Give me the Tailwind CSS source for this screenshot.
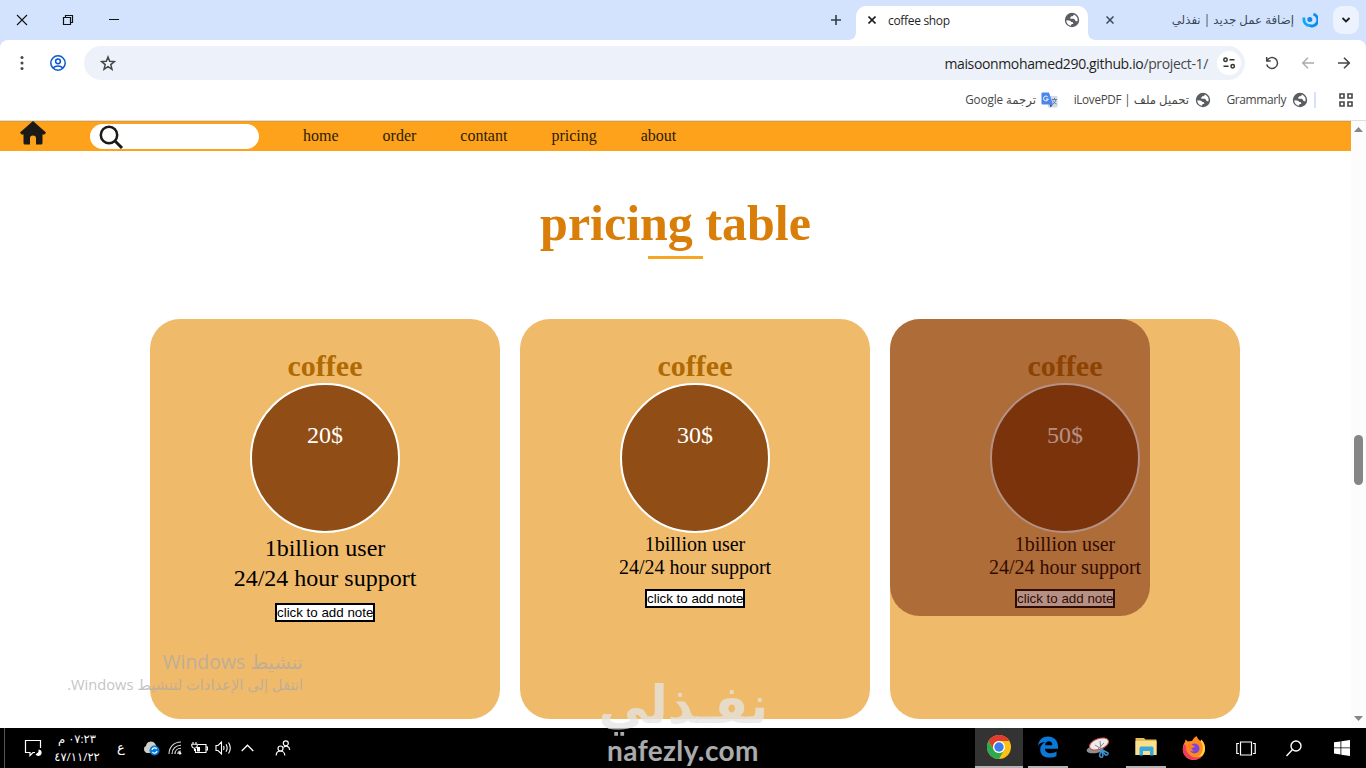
<!DOCTYPE html>
<html lang="en">
<head>
    <meta charset="UTF-8">
    <meta name="viewport" content="width=device-width, initial-scale=1.0">
    <title>coffee shop</title>
    <script src="https://cdn.jsdelivr.net/npm/@tailwindcss/browser@4"></script>
</head>
<body class="w-[1366px] h-[768px] overflow-hidden relative flex flex-col bg-white font-['Open_Sans','DejaVu_Sans',sans-serif]">

    <!-- Shared icons -->
    <svg class="hidden">
        <symbol id="globe" viewBox="0 0 16 16">
            <circle cx="8" cy="8" r="7.200" fill="#5a5d61"/>
            <path d="M2.300 8.300l2.700.2q2 .2 2.200 1.600h1q1 .2 1 1.300v.6H7.600q-.2 1.300-1 1.800C4 13.200 2.200 11 2.300 8.300z" fill="#fff"/>
            <path d="M9.800 2.600q0 1.400-1.300 1.600H7.200q0 1.400-1.400 1.500.2 1 1.400 1h2.400q1.200.2 1.300 1.400.2 1.100 1.500 1.100h1.100q.5-2.600-.6-4.100Q11.600 3.200 9.800 2.600z" fill="#fff"/>
        </symbol>
    </svg>

    <!-- Tab strip -->
    <header class="h-10 shrink-0 flex bg-[#d3e3fd] text-[#1f1f1f]">
        <div class="flex items-center">
            <div class="w-11 flex justify-center"><svg width="12" height="12" viewBox="0 0 12 12" stroke="#111" stroke-width="1.1"><path d="M1 1l10 10M11 1L1 11"/></svg></div>
            <div class="w-12 flex justify-center"><svg width="12" height="12" viewBox="0 0 12 12" fill="none" stroke="#111" stroke-width="1.2"><path d="M1.500 3.500h7v7h-7zM3.500 3.500v-2h7v7h-2"/></svg></div>
            <div class="w-11 flex justify-center"><svg width="12" height="12" viewBox="0 0 12 12" stroke="#111" stroke-width="1"><path d="M1 5.500h10"/></svg></div>
        </div>
        <div class="ml-auto flex items-center">
            <svg class="mr-[15px]" width="10" height="10" viewBox="0 0 10 10" stroke="#333c4b" stroke-width="1.600"><path d="M5 0v10M0 5h10"/></svg>
            <div class="relative w-[232px] h-[34px] self-end rounded-t-[10px] bg-white flex items-center">
                <svg class="absolute -left-2 bottom-0" width="8" height="8" viewBox="0 0 8 8" fill="#fff"><path d="M8 0v8H0c5 0 8-3 8-8z"/></svg>
                <svg class="absolute -right-2 bottom-0" width="8" height="8" viewBox="0 0 8 8" fill="#fff"><path d="M0 0v8h8C3 8 0 5 0 0z"/></svg>
                <svg class="ml-3 -mt-1.5" width="8" height="8" viewBox="0 0 8 8" stroke="#1f1f1f" stroke-width="1.600"><path d="M.5.5l7 7M7.500.5l-7 7"/></svg>
                <span class="ml-3 -mt-1 text-[12px] tracking-[-0.32px]">coffee shop</span>
                <svg class="ml-auto mr-2 -mt-1.5" width="16" height="16"><use href="#globe"/></svg>
            </div>
            <svg class="ml-[18px]" width="8" height="8" viewBox="0 0 8 8" stroke="#3c4757" stroke-width="1.500"><path d="M.5.5l7 7M7.500.5l-7 7"/></svg>
            <div class="w-[180px] flex justify-end"><span dir="rtl" class="text-[11.800px] whitespace-nowrap text-[#3c4757]">إضافة عمل جديد | نفذلي</span></div>
            <svg class="ml-2" width="16" height="16" viewBox="0 0 16 16" fill="none">
                <path d="M1.800 5.500Q1.500 13.500 8.500 13.700" stroke="#12a4f8" stroke-width="2.800"/>
                <path d="M8 13.700a6 6 0 0 0 3.500-11.500" stroke="#0a8df0" stroke-width="2.800"/>
                <circle cx="7.800" cy="7.500" r="2.500" fill="#0a8df0"/>
            </svg>
            <div class="ml-[15px] mr-[7px] w-[26px] h-7 rounded-[9px] bg-[#ecf3fe] flex items-center justify-center">
                <svg width="10" height="6" viewBox="0 0 10 6" fill="none" stroke="#1f1f1f" stroke-width="1.800"><path d="M1.500 1L5 4.500 8.500 1"/></svg>
            </div>
        </div>
    </header>

    <!-- Toolbar -->
    <div class="h-[46px] shrink-0 bg-[#d3e3fd]">
        <div class="h-full rounded-t-lg bg-white flex items-center">
            <svg class="ml-5" width="4" height="16" viewBox="0 0 4 16" fill="#474747"><circle cx="2" cy="2.500" r="1.500"/><circle cx="2" cy="8" r="1.500"/><circle cx="2" cy="13.500" r="1.500"/></svg>
            <svg class="ml-[26px]" width="16" height="16" viewBox="0 0 16 16" fill="none" stroke="#0b57d0" stroke-width="1.500"><circle cx="8" cy="8" r="7.200"/><circle cx="8" cy="6.300" r="2.400"/><path d="M3 13c2.800-2.700 7.200-2.700 10 0"/></svg>
            <div class="ml-[18px] w-[1161px] h-[34px] rounded-full bg-[#edf2fa] flex items-center">
                <svg class="ml-4" width="16" height="16" viewBox="0 0 16 16" fill="none" stroke="#474747" stroke-width="1.500"><path d="M8 2l1.700 4.300 4.600.3-3.500 3 1.200 4.700L8 11.700l-4 2.600 1.200-4.700-3.500-3 4.600-.3z"/></svg>
                <div class="ml-auto text-[14px] tracking-[-0.36px] whitespace-nowrap text-[#1f1f1f]">maisoonmohamed290.github.io<span class="text-[#474747]">/project-1/</span></div>
                <div class="ml-[9px] mr-1 w-6 h-6 rounded-full bg-white flex items-center justify-center">
                    <svg width="14" height="14" viewBox="0 0 14 14" fill="none" stroke="#333" stroke-width="1.500"><circle cx="3.500" cy="3.700" r="1.700"/><path d="M7.500 3.700h5M1.500 10.200h5"/><circle cx="10.700" cy="10.200" r="1.700"/></svg>
                </div>
            </div>
            <svg class="ml-5" width="14" height="14" viewBox="0 0 14 14" fill="none" stroke="#474747" stroke-width="1.500"><path d="M1.700 1v4h4M2 4.700A5.500 5.500 0 1 1 1.700 8.500"/></svg>
            <svg class="ml-[22px]" width="14" height="14" viewBox="0 0 14 14" fill="none" stroke="#aaa" stroke-width="1.400"><path d="M13 7H2M7 1.700L1.700 7 7 12.300"/></svg>
            <svg class="ml-[22px]" width="14" height="14" viewBox="0 0 14 14" fill="none" stroke="#474747" stroke-width="1.600"><path d="M1 7h11M7 1.700L12.300 7 7 12.300"/></svg>
        </div>
    </div>

    <!-- Bookmarks bar -->
    <div class="h-[35px] shrink-0 border-b border-[#dcdfe4] flex items-center justify-end pb-1.5 text-[12px] text-[#474747] whitespace-nowrap">
        <span dir="rtl" class="text-[11.700px] tracking-[-0.1px]">ترجمة Google</span>
        <svg class="ml-[5px]" width="17" height="16" viewBox="0 0 17 16">
            <rect x="7" y="4" width="9.500" height="11.500" rx="1" fill="#d4dae2"/>
            <path d="M1.500.5H8l4 12H1.500a1 1 0 0 1-1-1v-10a1 1 0 0 1 1-1z" fill="#4a86ee"/>
            <path d="M8.500 12.500H12l-2.500 3z" fill="#2d55b5"/>
            <path d="M7 5.200A2.400 2.400 0 1 0 7.300 7H5" fill="none" stroke="#fff"/>
            <path d="M11 7.500h5M13.500 6v1.500M15 7.500c-.5 2-1.500 3.500-3 4.500M12 8.500c.5 1.500 1.800 2.700 3.500 3.500" fill="none" stroke="#54769c" stroke-width=".9"/>
        </svg>
        <div class="w-[131px] flex justify-end"><span dir="rtl" class="text-[11.700px] tracking-[-0.3px]">تحميل ملف | iLovePDF</span></div>
        <svg class="ml-1.5" width="16" height="16"><use href="#globe"/></svg>
        <div class="w-[75px] flex justify-end"><span class="tracking-[-0.4px]">Grammarly</span></div>
        <svg class="ml-1.5" width="16" height="16"><use href="#globe"/></svg>
        <div class="ml-[6px] w-0.5 h-4 bg-[#d3e3fd]"></div>
        <svg class="ml-[23px] mr-[13px]" width="14" height="14" viewBox="0 0 14 14" fill="none" stroke="#474747" stroke-width="1.600"><path d="M1 1h4v4H1zM9 1h4v4H9zM1 9h4v4H1zM9 9h4v4H9z"/></svg>
    </div>

    <!-- Page -->
    <div class="h-[607px] shrink-0 flex">
        <main class="w-[1351px] h-full overflow-hidden font-['Liberation_Serif',serif] text-black">
            <nav class="h-[30px] bg-[#fea21b] flex items-center text-[16px] text-[#2b1c06] border-t border-[#e79a2b]">
                <svg class="ml-5 -mt-[7px]" width="26" height="24" viewBox="0 0 26 24" fill="#1c1a17"><path d="M13 0L26 11.500 24.500 13.500H22.500V22q0 1.500-1.500 1.500h-5V17q0-2.500-3-2.500T10 17v6.500H5Q3.500 23.500 3.500 22v-8.500h-2L0 11.500z"/></svg>
                <div class="ml-11 w-[169px] h-[25px] rounded-full bg-white flex items-center pl-[9px]">
                    <svg width="25" height="25" viewBox="0 0 25 25" fill="none" stroke="#1c1a17"><circle cx="10" cy="11" r="8.200" stroke-width="2.500"/><path d="M16 17l7 7" stroke-width="3"/></svg>
                </div>
                <ul class="ml-11 -mt-px flex gap-11">
                    <li>home</li>
                    <li>order</li>
                    <li>contant</li>
                    <li>pricing</li>
                    <li>about</li>
                </ul>
            </nav>

            <div class="pt-[43px] h-[168px] flex flex-col items-center">
                <h1 class="text-[50px] leading-[58px] font-bold text-[#d97e08]">pricing table</h1>
                <div class="mt-[4px] w-[55px] h-[3px] bg-[#f5a623]"></div>
            </div>

            <!-- Pricing cards -->
            <section class="ml-[150px] flex gap-5 text-center">
                <div class="w-[350px] h-[400px] pt-[30px] rounded-[30px] bg-[#f0ba6b] flex flex-col items-center">
                    <h2 class="text-[30px] leading-[34px] font-bold text-[#b06a04]">coffee</h2>
                    <div class="w-[150px] h-[150px] pt-9 rounded-full border-2 border-white bg-[#904e16] text-white text-[24px] leading-7">20$</div>
                    <p class="text-[24px] leading-[30px]">1billion user<br>24/24 hour support</p>
                    <button class="mt-2.5 w-[100px] h-[19px] border-2 border-black bg-white font-['Liberation_Sans',sans-serif] text-[13.333px] leading-[15px] whitespace-nowrap">click to add note</button>
                </div>
                <div class="w-[350px] h-[400px] pt-[30px] rounded-[30px] bg-[#f0ba6b] flex flex-col items-center">
                    <h2 class="text-[30px] leading-[34px] font-bold text-[#b06a04]">coffee</h2>
                    <div class="w-[150px] h-[150px] pt-9 rounded-full border-2 border-white bg-[#904e16] text-white text-[24px] leading-7">30$</div>
                    <p class="text-[20px] leading-[23px]">1billion user<br>24/24 hour support</p>
                    <button class="mt-2.5 w-[100px] h-[19px] border-2 border-black bg-white font-['Liberation_Sans',sans-serif] text-[13.333px] leading-[15px] whitespace-nowrap">click to add note</button>
                </div>
                <div class="relative w-[350px] h-[400px] pt-[30px] rounded-[30px] bg-[#f0ba6b] flex flex-col items-center">
                    <h2 class="text-[30px] leading-[34px] font-bold text-[#b06a04]">coffee</h2>
                    <div class="w-[150px] h-[150px] pt-9 rounded-full border-2 border-white bg-[#904e16] text-white text-[24px] leading-7">50$</div>
                    <p class="text-[20px] leading-[23px]">1billion user<br>24/24 hour support</p>
                    <button class="mt-2.5 w-[100px] h-[19px] border-2 border-black bg-white font-['Liberation_Sans',sans-serif] text-[13.333px] leading-[15px] whitespace-nowrap">click to add note</button>
                    <div class="absolute left-0 top-0 w-[260px] h-[297px] rounded-[30px] bg-[#651800]/48"></div>
                </div>
            </section>
        </main>

        <!-- Scrollbar -->
        <div class="w-[15px] h-full bg-[#fcfcfc] flex flex-col items-center pt-1.5 pb-[7px]">
            <svg width="9" height="5" viewBox="0 0 9 5" fill="#858585"><path d="M4.500 0L9 5H0z"/></svg>
            <div class="mt-[303px] w-[9px] h-[50px] rounded-full bg-[#858585]"></div>
            <svg class="mt-auto" width="9" height="5" viewBox="0 0 9 5" fill="#858585"><path d="M0 0h9L4.500 5z"/></svg>
        </div>
    </div>

    <!-- Taskbar -->
    <footer class="h-10 shrink-0 bg-black text-white flex items-center">
        <div class="ml-1 w-px h-full bg-[#555]"></div>
        <div class="w-[52px] pl-1 flex justify-center"><svg width="18" height="18" viewBox="0 0 18 18" fill="none" stroke="#fff" stroke-width="1.200"><path d="M11 13.500H9l-3 3v-3H1.500v-12h15V9"/><path d="M14.500 10.500a3.200 3.200 0 1 1-3 4.500 3.600 3.600 0 0 0 3-4.500z" fill="#fff" stroke="none"/></svg></div>
        <div class="w-10 flex flex-col items-center text-[11.500px] leading-[18px] whitespace-nowrap">
            <span dir="rtl">٠٧:٢٣ م</span>
            <span class="tracking-[-1px]">٤٧/١١/٢٢</span>
        </div>
        <div class="w-[42px] pl-1.5 text-center text-[13px]">ع</div>
        <div class="w-6 flex justify-center"><svg width="17" height="16" viewBox="0 0 17 16"><path d="M1 9a3 3 0 0 1 2-3 5 5 0 0 1 9-2.500l2 4L10 13H4q-3-1-3-4z" fill="#cfcdc8"/><circle cx="11.500" cy="10.500" r="5" fill="#0a7cd8"/><path d="M9 10a2.600 2.600 0 0 1 4.700-1M14 11a2.600 2.600 0 0 1-4.700 1" fill="none" stroke="#fff" stroke-width="1.200"/></svg></div>
        <div class="w-6 flex justify-center"><svg width="14" height="14" viewBox="0 0 14 14" fill="none" stroke="#ddd" stroke-width="1.100"><path d="M1 13C1 6 6 1 13 1M4 13c0-5 4-8.800 9-8.800M7 13c0-3.500 2.500-5.800 6-5.800M9.800 13c0-1.700 1.300-3 3.200-3"/><circle cx="12" cy="12.300" r="1.300" fill="#fff" stroke="none"/></svg></div>
        <div class="w-6 flex justify-center"><svg width="17" height="12" viewBox="0 0 17 12" fill="none" stroke="#fff" stroke-width="1.100"><path d="M7 2.500h8v8H4.500V7M15.500 5h1v3h-1M2 0v2M5 0v2M.8 2.200h5.400v2q-.5 2-2.700 2t-2.700-2zM3.500 6v2.500h1"/><path d="M6 5h3v4.500H6z" fill="#fff" stroke="none"/></svg></div>
        <div class="w-6 flex justify-center"><svg width="17" height="14" viewBox="0 0 17 14" fill="none" stroke="#fff" stroke-width="1.100"><path d="M1 4.500h2l3.500-3.500v12L3 9.500H1zM8.500 5q1 2 0 4M11 3.200q2.300 3.800 0 7.600M13.500 1.500q3.600 5.500 0 11"/></svg></div>
        <div class="w-6 flex justify-center"><svg width="13" height="8" viewBox="0 0 13 8" fill="none" stroke="#fff" stroke-width="1.300"><path d="M.7 7l5.800-5.800L12.300 7"/></svg></div>
        <div class="w-12 flex justify-center"><svg width="16" height="16" viewBox="0 0 16 16" fill="none" stroke="#fff" stroke-width="1.200"><circle cx="5.500" cy="8.500" r="2.500"/><path d="M1.200 15.500c0-6 8.600-6 8.600 0"/><circle cx="10.800" cy="3.300" r="2.500"/><path d="M8.500 7.500c2-2.500 6-1.500 6.200 2.500"/></svg></div>

        <div class="ml-auto h-full flex">
            <div class="w-12 bg-[#333] border-b-2 border-[#b4b4b4] flex items-center justify-center">
                <svg width="24" height="24" viewBox="0 0 24 24">
                    <circle cx="12" cy="12" r="12" fill="#fbc116"/>
                    <path d="M1.600 6A12 12 0 0 1 22.400 6H12a6 6 0 0 0-5.200 9z" fill="#e33b2e"/>
                    <path d="M1.600 6A12 12 0 0 0 12 24l5.200-9A6 6 0 0 1 6.800 15z" fill="#2da94f"/>
                    <circle cx="12" cy="12" r="6" fill="#fff"/>
                    <circle cx="12" cy="12" r="4.700" fill="#3b7ded"/>
                </svg>
            </div>
            <div class="ml-[5px] w-10 border-b-2 border-[#b4b4b4] flex items-center justify-center">
                <svg width="22" height="22" viewBox="0 0 22 22" fill="#0a78d7"><path d="M1 9.500C1.800 3.800 5.800.5 11 .5c6 0 10 4.200 10 10v2.300H7.800c.2 3 2.500 4.400 5.700 4.400 2.300 0 4.300-.6 6-1.700v4.600c-2 1-4.300 1.500-7 1.500-6 0-9.300-3.300-9.300-8.200C3.200 10 5.300 7.500 8.500 6 5 6 2.500 7.400 1 9.500zM8 9.200h7.300c0-2.500-1.200-4-3.400-4C9.600 5.200 8.300 7 8 9.200z"/></svg>
            </div>
            <div class="ml-[6px] w-12 flex items-center justify-center">
                <svg width="24" height="22" viewBox="0 0 24 22" fill="none">
                    <ellipse cx="9" cy="12.500" rx="8.500" ry="3.700" fill="#8f8f90" transform="rotate(-8 9 12.500)"/>
                    <ellipse cx="13" cy="7" rx="10" ry="5.300" fill="#ececec" stroke="#c94b4b" transform="rotate(-20 13 7)"/>
                    <path d="M14 4l1 9M18 6l-6 6M9 8l5 3" stroke="#888" stroke-width="1"/>
                    <path d="M15 13l-1.500 6q2.500 3 3.500-.5L15.500 13l4 5q3 .5 2.500-2L15.500 12.500" stroke="#3e93d1" stroke-width="1.500"/>
                </svg>
            </div>
            <div class="ml-1 mr-1 w-10 border-b-2 border-[#b4b4b4] flex items-center justify-center">
                <svg width="22" height="18" viewBox="0 0 22 18"><path d="M.5 0H9l1.500 1.500h11V17H.5z" fill="#e8bc4f"/><path d="M.5 3h21v14H.5z" fill="#fbdf8e"/><path d="M4.500 17.500V10q0-1.500 1.500-1.500h11q1.500 0 1.500 1.500v7.500H15V13H8v4.500z" fill="#39a9dc"/></svg>
            </div>
            <div class="w-12 flex items-center justify-center">
                <svg width="24" height="24" viewBox="0 0 24 24">
                    <path d="M12 24C5.500 24 .8 19.500.8 13c0-3 1-5.500 2.200-7l.5-2.500L6 5.500q2-.8 4-.4 1-3 4.500-5 1 3 4 5 1-1 .8-1.500 3.500 4 3.700 9C23 19.500 18 24 12 24z" fill="#ff8a1e"/>
                    <path d="M14.500.1q1 3 4 5 3 4.500 2 9-1 5.500-6 7.500 8.500-1 8.500-9 0-5-3.700-9 .2.500-.8 1.500-3-2-4-5z" fill="#ffd43c"/>
                    <path d="M1 11q-.8 7 4 10.500Q9 24.500 14 23.700q4-1 6-3.700-6 3-11 0T4 11L3 8z" fill="#f2385f"/>
                    <circle cx="12.500" cy="12.500" r="5" fill="#7b45d8"/>
                    <path d="M6 9q3-2 5 .5l2 .5q-1 2-3.500 2.300 0 2 3 2.700-5 1-6-2z" fill="#ff7a2a"/>
                </svg>
            </div>
            <div class="ml-1 w-12 flex items-center justify-center"><svg width="20" height="15" viewBox="0 0 20 15" fill="none" stroke="#fff" stroke-width="1.200"><path d="M4.500 1h11v13h-11zM3 2.500H.8v10H3M17 2.500h2.200v10H17"/></svg></div>
            <div class="w-12 flex items-center justify-center"><svg width="16" height="17" viewBox="0 0 16 17" fill="none" stroke="#fff" stroke-width="1.400"><circle cx="10" cy="6" r="5"/><path d="M6.300 9.700L.5 16"/></svg></div>
            <div class="w-12 flex items-center justify-center"><svg width="16" height="16" viewBox="0 0 16 16" fill="#fff"><path d="M0 2.300l6.500-.9v6.100H0zM7.300 1.300L16 0v7.500H7.300zM0 8.300h6.500v6.200L0 13.600zM7.300 8.300H16V16l-8.700-1.300z"/></svg></div>
        </div>
    </footer>

    <!-- Activation notice, over the page -->
    <div dir="rtl" class="absolute right-[1063px] top-[648px] whitespace-nowrap text-[#a9a9a9]/70">
        <div class="text-[19.400px] leading-[27px]">تنشيط Windows</div>
        <div class="text-[14.700px] leading-[18px]">انتقل إلى الإعدادات لتنشيط Windows.</div>
    </div>

    <!-- Site watermark, over the page and taskbar -->
    <div class="absolute left-[583px] top-[675px] w-[200px] h-[93px] flex flex-col items-center text-[#e4e4e4]/75 whitespace-nowrap">
        <div dir="rtl" class="text-[52px] leading-[60px] font-bold scale-x-[.96] font-['DejaVu_Sans',sans-serif]">نفـذلي</div>
        <div class="-mt-[3px] text-[28px] leading-[36px] font-bold tracking-[0.4px] font-['Lato',sans-serif]">nafezly.com</div>
    </div>
</body>
</html>
